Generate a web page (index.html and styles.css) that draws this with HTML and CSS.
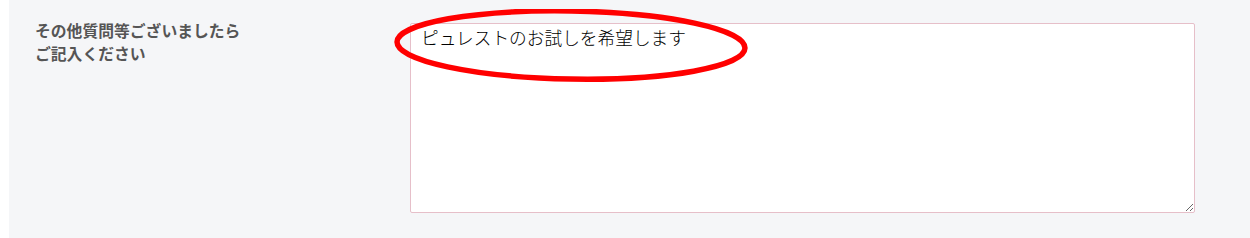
FILE: index.html
```html
<!DOCTYPE html>
<html lang="ja">
<head>
  <meta charset="UTF-8">
  <meta name="viewport" content="width=device-width, initial-scale=1.0">
  <title>お問い合わせ</title>
  <link rel="stylesheet" href="styles.css">
</head>
<body>
  <div class="form-area">
    <div class="form-row">
      <label class="form-label" for="other">その他質問等ございましたら<br>ご記入ください</label>
      <div class="form-field">
        <textarea id="other" name="other">ピュレストのお試しを希望します</textarea>
        <!-- annotation circle -->
        <svg class="mark" width="360" height="80" viewBox="0 0 360 80">
          <ellipse cx="177" cy="36" rx="174" ry="34" fill="none" stroke="#ff0000" stroke-width="5.5" transform="rotate(1 177 36)"/>
        </svg>
      </div>
    </div>
  </div>
</body>
</html>
```

FILE: styles.css
```css
/* Reset */
html {
  box-sizing: border-box;
}
*, *:before, *:after {
  box-sizing: inherit;
}
body {
  margin: 0;
  background: #fff;
  font-family: "Noto Sans CJK JP", "Noto Sans", sans-serif;
  color: #333;
}

/* Form area */
.form-area {
  margin-left: 9px;
  min-height: 238px;
  background-color: #f5f6f8;
  padding: 19px 0 0 26px;
}
.form-row {
  display: flex;
}
.form-label {
  width: 375px;
  flex-shrink: 0;
  font-size: 15.8px;
  line-height: 23px;
  font-weight: bold;
  color: #555;
}
.form-field {
  position: relative;
  padding-top: 4px;
}
.form-field textarea {
  display: block;
  width: 785px;
  height: 190px;
  padding: 1px 10px;
  border: 1px solid #e6bfc9;
  border-radius: 2px;
  background: #fff;
  font-family: "Noto Sans CJK JP", sans-serif;
  font-size: 17.7px;
  line-height: 24px;
  font-weight: 300;
  color: #000;
  resize: vertical;
}

/* Red annotation */
.mark {
  position: absolute;
  left: -16px;
  top: -10px;
  pointer-events: none;
}
```
